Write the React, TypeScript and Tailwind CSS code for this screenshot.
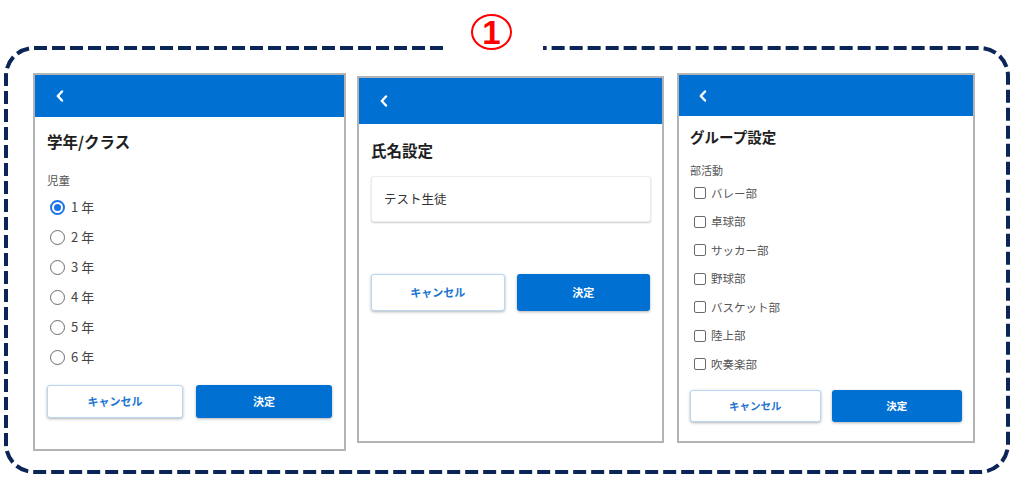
const grades = ["1 年", "2 年", "3 年", "4 年", "5 年", "6 年"]
const clubs = ["バレー部", "卓球部", "サッカー部", "野球部", "バスケット部", "陸上部", "吹奏楽部"]

const font = { fontFamily: '"Noto Sans CJK JP", "Noto Sans", sans-serif' }

const Back = () => (
  <svg width="8" height="12" viewBox="0 0 8 12" fill="none">
    <path d="M6 1.5 L1.8 6 L6 10.5" stroke="white" strokeWidth="2.4" strokeLinecap="round" strokeLinejoin="round" />
  </svg>
)

// dashed frame with an opening for the number label
const Frame = () => (
  <svg className="pointer-events-none absolute left-0 top-0" width="1024" height="482" fill="none">
    <path
      d="M443 48 H34 A28 28 0 0 0 6 76 V444 A28 28 0 0 0 34 472 H980 A28 28 0 0 0 1008 444 V76 A28 28 0 0 0 980 48 H543"
      stroke="#0b2558"
      strokeWidth="4"
      strokeDasharray="13 5"
    />
  </svg>
)

const Buttons = ({ h, w, gap, size }: { h: string; w: string; gap: string; size: string }) => (
  <div className={`flex ${gap}`}>
    <button type="button" className={`${h} ${w} ${size} rounded-[3px] border border-[#b9d7f5] bg-white font-bold text-[#1b74d1] shadow-[0_1px_3px_rgba(0,0,0,0.3)]`}>
      キャンセル
    </button>
    <button type="button" className={`${h} ${w} ${size} rounded-[3px] bg-[#0070d2] font-bold text-white shadow-[0_1px_3px_rgba(0,0,0,0.3)]`}>
      決定
    </button>
  </div>
)

const App = () => {
  return (
    <div className="relative h-[482px] w-[1024px] overflow-hidden bg-white pt-[14px]" style={font}>
      <Frame />
      <div className="relative ml-[471px] flex h-[36px] w-[41px] items-center justify-center rounded-[50%] border-[2.5px] border-[#ff0000] text-[33px] font-bold leading-none text-[#ff0000]" style={{ fontFamily: '"Liberation Sans", sans-serif' }}>
        1
      </div>

      <div className="relative mt-[23px] flex items-start pl-[33px]">
        {/* 学年/クラス */}
        <div className="h-[378px] w-[313px] border-2 border-[#b4b4b4] bg-white">
          <div className="flex h-[42px] items-center bg-[#0070d2] pl-[21px]">
            <Back />
          </div>
          <div className="px-[12px]">
            <h3 className="mt-[12px] text-[15.5px] font-bold leading-[24px] text-[#1e1e1e]">学年/クラス</h3>
            <p className="mt-[18px] text-[11.5px] leading-[18px] text-[#555]">児童</p>
            <div className="mt-[3px]">
              {grades.map((g, i) => (
                <div key={g} className="flex h-[30px] items-center gap-[6px] pl-[3px]">
                  {i === 0 ? (
                    <span className="flex h-[15px] w-[15px] items-center justify-center rounded-full border-2 border-[#1a73e8]">
                      <span className="h-[7px] w-[7px] rounded-full bg-[#1a73e8]" />
                    </span>
                  ) : (
                    <span className="h-[15px] w-[15px] rounded-full border-[1.5px] border-[#6b6b6b]" />
                  )}
                  <span className="text-[13px] text-[#444]">{g}</span>
                </div>
              ))}
            </div>
            <div className="mt-[13px]">
              <Buttons h="h-[33px]" w="w-[136px]" gap="gap-[13px]" size="text-[11px]" />
            </div>
          </div>
        </div>

        {/* 氏名設定 */}
        <div className="ml-[11px] mt-[3px] h-[367px] w-[307px] border-2 border-[#b4b4b4] bg-white">
          <div className="flex h-[46px] items-center bg-[#0070d2] pl-[21px]">
            <Back />
          </div>
          <div className="px-[12px]">
            <h3 className="mt-[14px] text-[15.5px] font-bold leading-[24px] text-[#1e1e1e]">氏名設定</h3>
            <div className="mt-[14px] flex h-[46px] w-[280px] items-center rounded-[3px] border border-[#ececec] bg-white pl-[12px] text-[12.5px] text-[#333] shadow-[0_1px_2px_rgba(0,0,0,0.2)]">
              テスト生徒
            </div>
            <div className="mt-[52px]">
              <Buttons h="h-[37px]" w="w-[134px]" gap="gap-[12px]" size="text-[11px]" />
            </div>
          </div>
        </div>

        {/* グループ設定 */}
        <div className="ml-[13px] h-[370px] w-[298px] border-2 border-[#b4b4b4] bg-white">
          <div className="flex h-[41px] items-center bg-[#0070d2] pl-[20px]">
            <Back />
          </div>
          <div className="px-[11px]">
            <h3 className="mt-[9px] text-[14.5px] font-bold leading-[24px] text-[#1e1e1e]">グループ設定</h3>
            <p className="mt-[12px] text-[11px] leading-[18px] text-[#555]">部活動</p>
            <div>
              {clubs.map(c => (
                <div key={c} className="flex h-[28.5px] items-center gap-[5px] pl-[4px]">
                  <span className="h-[12px] w-[12px] rounded-[2px] border-[1.5px] border-[#6b6b6b]" />
                  <span className="text-[11.5px] text-[#555]">{c}</span>
                </div>
              ))}
            </div>
            <div className="mt-[11px]">
              <Buttons h="h-[32px]" w="w-[131px]" gap="gap-[11px]" size="text-[10.5px]" />
            </div>
          </div>
        </div>
      </div>
    </div>
  )
}

export default App
